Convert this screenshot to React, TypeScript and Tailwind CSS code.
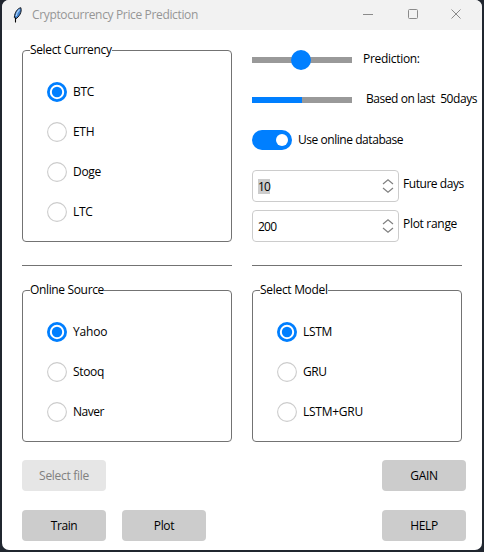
import React from "react";
import clsx from "clsx";

function Label({ children, className }: { children: string; className?: string }) {
  return <span className={clsx("whitespace-pre", className)}>{children}</span>;
}

function Radio({ label, checked, tracking }: { label: string; checked?: boolean; tracking?: string }) {
  return (
    <div className="flex h-5 items-center gap-1.5">
      <svg width="20" height="20" viewBox="0 0 20 20" className="shrink-0">
        {checked ? (
          <>
            <circle cx="10" cy="10" r="8.6" fill="#fff" stroke="#007fff" strokeWidth="2.8" />
            <circle cx="10" cy="10" r="5.2" fill="#007fff" />
          </>
        ) : (
          <circle cx="10" cy="10" r="9.4" fill="#fff" stroke="#ccc" strokeWidth="1.1" />
        )}
      </svg>
      <Label className={tracking}>{label}</Label>
    </div>
  );
}

function Frame({ title, tracking, className, children }: { title: string; tracking?: string; className?: string; children: React.ReactNode }) {
  return (
    <section className={clsx("w-[210px] rounded-[4px] border border-[#737373] pl-6", className)}>
      <h2 className="-mt-[9px] -ml-[17px] flex h-4 w-fit items-center bg-white">
        <Label className={tracking}>{title}</Label>
      </h2>
      <div className="mt-6 flex flex-col gap-5">{children}</div>
    </section>
  );
}

function Spin({ value, selected }: { value: string; selected?: boolean }) {
  return (
    <div className="flex h-8 w-[147px] items-center justify-between rounded-[4px] border border-[#ccc] pr-1 pl-[5px]">
      <Label className={clsx("h-[15px] leading-[15px] tracking-[-0.75px]", selected && "bg-[#ccc]")}>{value}</Label>
      <svg width="12" height="14" viewBox="0 0 12 14" fill="none" stroke="#808080" strokeWidth="1.2">
        <path d="M1 5 6 .8 11 5M1 9l5 4.2L11 9" />
      </svg>
    </div>
  );
}

function Button({ label, disabled, tracking }: { label: string; disabled?: boolean; tracking?: string }) {
  return (
    <button
      className={clsx(
        "flex h-[31px] w-[84px] items-center justify-center rounded-[4px]",
        disabled ? "bg-[#e6e6e6] text-[#808080]" : "bg-[#ccc] text-black",
      )}
    >
      <Label className={tracking}>{label}</Label>
    </button>
  );
}

function TitleBar() {
  return (
    <header className="flex h-[30px] items-center bg-[#f2f2f2] text-[#969696]">
      <svg className="ml-[11px]" width="10" height="16" viewBox="0 0 10 16">
        <path d="M7.8.7C4.5 1.5 1.8 5 1.3 10.5l1.5 1.3C6 10 9.3 5 7.8.7Z" fill="#4384cf" stroke="#15171c" />
        <path d="M6.5 2.5C4.8 4 3.6 6.5 3.2 9" fill="none" stroke="#a9d0f8" strokeWidth="1.3" />
        <path d="M2.5 10.5V15.5" fill="none" stroke="#050505" strokeWidth="1.1" />
      </svg>
      <Label className="ml-[9px] tracking-[-0.35px]">Cryptocurrency Price Prediction</Label>
      <svg className="ml-auto mr-[21px]" width="102" height="12" viewBox="0 0 102 12" fill="none" stroke="#8b8b8b">
        <path d="M4 5.5h10" />
        <rect x="49.5" y=".5" width="9" height="9" rx="1" />
        <path d="m92.5.5 9 9m0-9-9 9" />
      </svg>
    </header>
  );
}

export default function App() {
  return (
    <div className="h-[552px] w-[484px] overflow-hidden bg-[#20262f] px-0.5 font-['Open_Sans','Noto_Sans',sans-serif] text-[12px] leading-4 text-black">
      <main className="h-[550px] w-[480px] overflow-hidden rounded-[7px] bg-white">
        <TitleBar />
        <div className="flex gap-5 pt-5 pl-5">
          <Frame title="Select Currency" tracking="tracking-[-0.35px]" className="h-48">
            <Radio label="BTC" checked tracking="tracking-[-0.3px]" />
            <Radio label="ETH" tracking="tracking-[-0.3px]" />
            <Radio label="Doge" tracking="tracking-[-0.3px]" />
            <Radio label="LTC" tracking="tracking-[-0.3px]" />
          </Frame>
          <div className="flex w-[228px] flex-col">
            <div className="flex h-5 items-center">
              <svg width="100" height="20" viewBox="0 0 100 20" className="shrink-0">
                <path d="M0 7h100v6H0z" fill="#999" />
                <circle cx="49" cy="10" r="10" fill="#007fff" />
              </svg>
              <Label className="ml-[11px] -mt-0.5 tracking-[-0.3px]">Prediction:</Label>
            </div>
            <div className="mt-5 flex h-5 items-center">
              <div className="h-1.5 w-[100px] shrink-0 bg-[#999]">
                <div className="h-full w-1/2 bg-[#007fff]" />
              </div>
              <Label className="ml-3.5 -mt-0.5 tracking-[-0.45px]">Based on last  50days</Label>
            </div>
            <div className="mt-5 flex h-5 items-center gap-1.5">
              <div className="flex h-5 w-10 items-center justify-end rounded-full bg-[#007fff] pr-1">
                <div className="size-3 rounded-full bg-white" />
              </div>
              <Label className="tracking-[-0.45px]">Use online database</Label>
            </div>
            <div className="mt-5 flex h-8 gap-1">
              <Spin value="10" selected />
              <Label className="mt-1.5 tracking-[-0.45px]">Future days</Label>
            </div>
            <div className="mt-2 flex h-8 gap-1">
              <Spin value="200" />
              <Label className="mt-1.5 tracking-[-0.3px]">Plot range</Label>
            </div>
          </div>
        </div>
        <div className="mt-[23px] flex gap-5 pl-5">
          <div className="h-px w-[210px] bg-[#737373]" />
          <div className="h-px w-[210px] bg-[#737373]" />
        </div>
        <div className="mt-6 flex gap-5 pl-5">
          <Frame title="Online Source" tracking="tracking-[-0.35px]" className="h-[152px]">
            <Radio label="Yahoo" checked tracking="tracking-[-0.2px]" />
            <Radio label="Stooq" tracking="tracking-[-0.35px]" />
            <Radio label="Naver" tracking="tracking-[-0.5px]" />
          </Frame>
          <Frame title="Select Model" tracking="tracking-[-0.3px]" className="h-[152px]">
            <Radio label="LSTM" checked tracking="tracking-[-0.35px]" />
            <Radio label="GRU" tracking="tracking-[-0.5px]" />
            <Radio label="LSTM+GRU" tracking="tracking-[-0.25px]" />
          </Frame>
        </div>
        <div className="mt-[18px] flex justify-between pr-4 pl-5">
          <Button label="Select file" disabled tracking="tracking-[-0.3px]" />
          <Button label="GAIN" tracking="tracking-[-0.35px]" />
        </div>
        <div className="mt-[19px] flex justify-between pr-4 pl-5">
          <div className="flex gap-4">
            <Button label="Train" tracking="tracking-[-0.4px]" />
            <Button label="Plot" tracking="tracking-[-0.3px]" />
          </div>
          <Button label="HELP" tracking="tracking-[-0.35px]" />
        </div>
      </main>
    </div>
  );
}
